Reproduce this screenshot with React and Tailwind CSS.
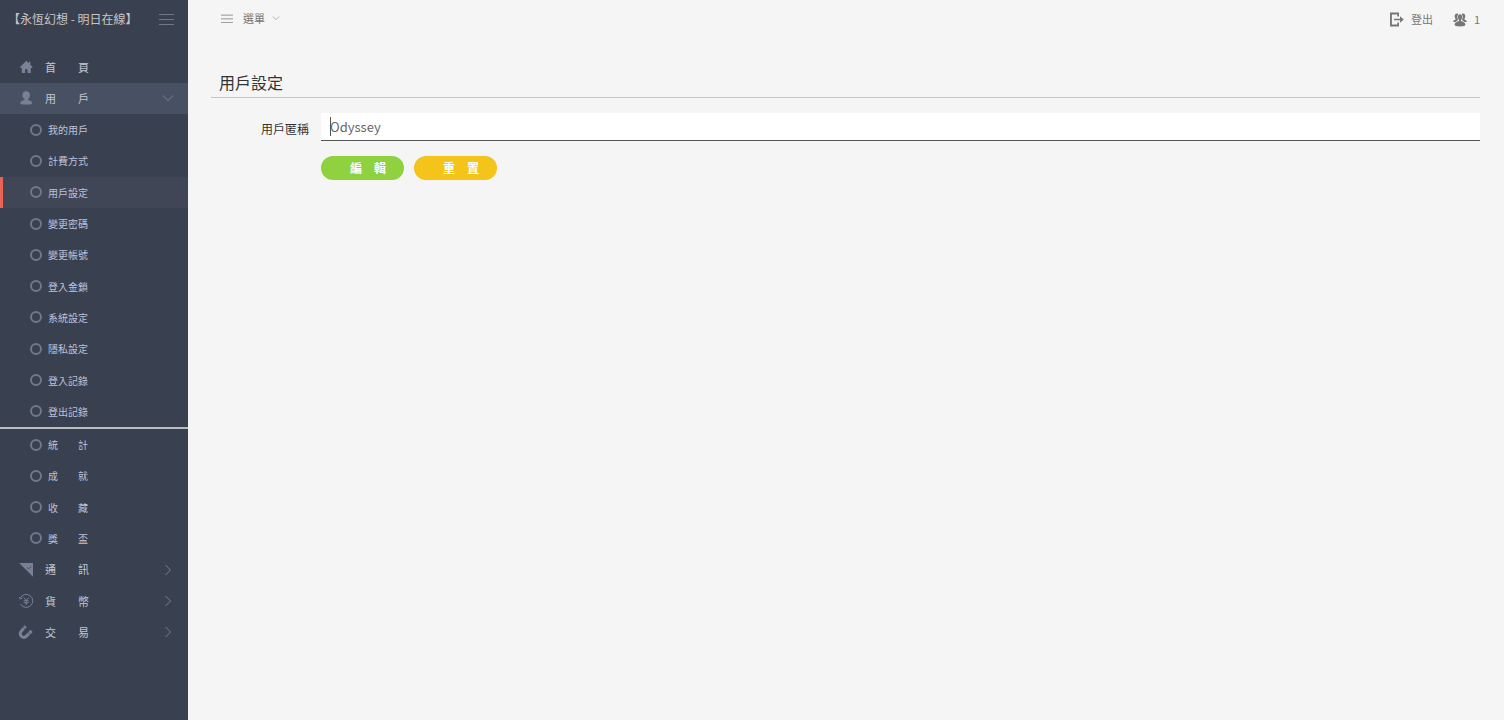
const userItems = [
  "我的用戶",
  "計費方式",
  "用戶設定",
  "變更密碼",
  "變更帳號",
  "登入金鎖",
  "系統設定",
  "隱私設定",
  "登入記錄",
  "登出記錄",
];

const statItems = ["統　　計", "成　　就", "收　　藏", "獎　　盃"];

const HomeIcon = () => (
  <svg viewBox="0 0 14 14" className="w-[14px] h-[14px]" fill="currentColor">
    <path d="M7.300.8 1.300 6.800v1.200h1.500v5h3.300V9.200h2.400V13h3.300V8h1.500V6.800l-2-2V1.800H9.800v1.500z" />
  </svg>
);

const UserIcon = () => (
  <svg viewBox="0 0 14 14" className="w-[14px] h-[14px]" fill="currentColor">
    <path d="M7.200.2C4.700.2 3.500 1.600 3.500 3.900c0 1.900.8 3.400 2 4.300v.9C3.600 9.700 1.300 10.100 1.300 12.300c0 1 1.400 1.300 5.900 1.300s5.900-.3 5.900-1.300c0-2.200-2.300-2.600-4.200-3.200v-.9c1.200-.9 2-2.400 2-4.300C10.900 1.600 9.700.2 7.200.2z" />
  </svg>
);

const MailIcon = () => (
  <svg viewBox="0 0 14 14" className="w-[14px] h-[14px]">
    <path d="M.2 0h14v14z" fill="currentColor" />
    <path d="m7.800 4.300 1.700 1.500 2.900-2.300" fill="none" stroke="#394150" strokeWidth=".8" />
  </svg>
);

const CoinIcon = () => (
  <svg viewBox="0 0 14 14" className="w-[14px] h-[14px] overflow-visible" fill="none" stroke="currentColor" strokeWidth="1">
    <path d="M1.200 4.400A6.500 6.500 0 1 1 1.500 10" />
    <path d="M.4 3.200 1.200 5l1.800-.6" />
    <path d="m4.600 3.500 2.600 3.100 2.600-3.100M7.200 6.600v4.400M4.700 6.700h5M4.700 8.700h5" />
  </svg>
);

const MagnetIcon = () => (
  <svg viewBox="0 0 14 14" className="w-[14px] h-[14px] overflow-visible" fill="none" stroke="currentColor" strokeWidth="3">
    <path d="M6.700 1.300 2.600 5.700C.8 7.700.9 10 2.400 11.300s3.800 1.200 5.600-.7l4.600-4.700" />
    <path d="m4 2.100 2.900 2.700M9 7.500l2.700 2.600" stroke="#394150" strokeWidth=".6" />
  </svg>
);

const LogoutIcon = () => (
  <svg viewBox="0 0 15 15" className="w-[15px] h-[15px]" fill="currentColor">
    <path d="M1 .5h9v4H8.300v-2H2.900v10h5.400v-2H10v4H1z" />
    <path d="M5 6.700h6V4.300l3.800 3.200L11 10.700V8.300H5z" />
  </svg>
);

const GroupIcon = () => (
  <svg viewBox="0 0 14 14" className="w-[14px] h-[14px]" fill="currentColor">
    <path d="M4 .5C5 .5 5.400 1 4.900 1.900 4.300 2.900 4.100 4.200 4.600 5.400L5 6.400 4.300 7.800 2.600 9H.3C.3 7.400.8 6.900 2.500 6.400V5.600C1.200 4.200 1.400.5 4 .5z" />
    <path d="M10 .5C9 .5 8.600 1 9.100 1.900c.6 1 .8 2.300.3 3.500L9 6.400l.7 1.400L11.400 9h2.300c0-1.600-.5-2.100-2.200-2.600v-.8C12.800 4.200 12.600.5 10 .5z" />
    <path d="M7 1.300c-1.500 0-2.100 1.200-2.100 2.700 0 1.300.4 2.300 1.100 2.900v1C4.200 8.700 1.600 9.200 1.600 11.600c0 1.500 1.900 1.900 5.400 1.900s5.400-.4 5.400-1.900C12.400 9.200 9.800 8.700 8 7.900v-1c.7-.6 1.100-1.600 1.100-2.900C9.100 2.500 8.500 1.300 7 1.300z" />
  </svg>
);

const MenuLines = ({ className }) => (
  <svg viewBox="0 0 15 12" className={className} fill="none" stroke="currentColor" preserveAspectRatio="none">
    <path d="M0 1.500h15M0 6.500h15M0 11.500h15" />
  </svg>
);

const Chevron = ({ className }) => (
  <svg viewBox="0 0 12 12" className={className} fill="none" stroke="currentColor">
    <path d="m3.500 1 5 5-5 5" />
  </svg>
);

const mainItems = [
  { label: "通　　訊", icon: MailIcon },
  { label: "貨　　幣", icon: CoinIcon },
  { label: "交　　易", icon: MagnetIcon },
];

const MainItem = ({ label, icon: Icon, arrow, open }) => (
  <li className={open ? "bg-[#485164]" : ""}>
    <a href="#" className="flex items-center h-full min-h-[31px] pl-[19px] pr-[14px] text-[11px] text-[#c3c7d0]">
      <span className="w-[26px] text-[#788195]">
        <Icon />
      </span>
      <span className="flex-1">{label}</span>
      {arrow && <Chevron className={open ? "w-3 h-3 rotate-90 text-[#788195]" : "w-3 h-3 text-[#788195]"} />}
    </a>
  </li>
);

const SubItem = ({ label, active }) => (
  <li className={active ? "bg-[#404656]" : ""}>
    <a
      href="#"
      className={
        active
          ? "flex items-center gap-[6px] h-full border-l-[3px] border-[#eb6357] pl-[27px] text-[10px] text-[#bfc0dc]"
          : "flex items-center gap-[6px] h-full border-l-[3px] border-transparent pl-[27px] text-[10px] text-[#bfc0dc]"
      }
    >
      <span className="w-3 h-3 rounded-full border-2 border-[#6c7a89]"></span>
      <span>{label}</span>
    </a>
  </li>
);

const Sidebar = () => (
  <aside className="w-[188px] shrink-0 bg-[#394150]">
    <div className="flex items-center justify-between h-[37px] pl-2 pr-[14px]">
      <a href="#" className="text-[12px] text-[#c6c6c6] whitespace-nowrap">【永恆幻想 - 明日在線】</a>
      <button type="button" aria-label="選單" className="text-[#6f7780]">
        <MenuLines className="w-[15px] h-3" />
      </button>
    </div>
    <nav className="pt-[14px]">
      <ul className="grid auto-rows-fr h-[63px]">
        <MainItem label="首　　頁" icon={HomeIcon} />
        <MainItem label="用　　戶" icon={UserIcon} arrow open />
      </ul>
      <ul className="grid auto-rows-fr h-[313px]">
        {userItems.map((label) => (
          <SubItem key={label} label={label} active={label === "用戶設定"} />
        ))}
      </ul>
      <hr className="border-0 h-[2px] bg-[#b9bdbf]" />
      <ul className="grid auto-rows-fr h-[125px]">
        {statItems.map((label) => (
          <SubItem key={label} label={label} />
        ))}
      </ul>
      <ul className="grid auto-rows-fr h-[94px]">
        {mainItems.map((item) => (
          <MainItem key={item.label} label={item.label} icon={item.icon} arrow />
        ))}
      </ul>
    </nav>
  </aside>
);

const TopBar = () => (
  <header className="flex items-center justify-between h-9 pl-[33px] pr-6 text-[11px] text-[#777]">
    <button type="button" className="flex items-center">
      <MenuLines className="w-3 h-[9px] mr-[10px]" />
      選單
      <Chevron className="w-2 h-2 ml-[7px] rotate-90 text-[#999]" />
    </button>
    <div className="flex items-center gap-5 pt-[3px]">
      <a href="#" className="flex items-center gap-[7px]">
        <LogoutIcon />
        登出
      </a>
      <a href="#" className="flex items-center gap-[7px]">
        <GroupIcon />
        1
      </a>
    </div>
  </header>
);

const buttonClass = "w-[83px] h-6 rounded-full pl-[11px] text-[12px] font-bold text-white";

const SettingsForm = () => (
  <form className="pt-[15px]" onSubmit={(e) => e.preventDefault()}>
    <div className="flex items-center">
      <label htmlFor="nickname" className="w-[110px] pr-3 pt-1 text-right text-[12px] text-[#333]">
        用戶匿稱
      </label>
      <div className="relative flex-1">
        <input
          id="nickname"
          type="text"
          placeholder="Odyssey"
          className="block w-full h-7 bg-white border-b border-[#555] px-[9px] text-[13px] text-[#666] placeholder:text-[#666] outline-none"
        />
        <span className="absolute left-[9px] top-1 w-px h-[19px] bg-[#555]"></span>
      </div>
    </div>
    <div className="flex gap-[10px] pt-[15px] pl-[110px]">
      <button type="submit" className={`${buttonClass} bg-[#8fd13f]`}>編　輯</button>
      <button type="reset" className={`${buttonClass} bg-[#f4c41a]`}>重　置</button>
    </div>
  </form>
);

const App = () => {
  return (
    <div className="flex min-h-screen bg-[#f5f5f5] font-['Noto_Sans_CJK_TC','Noto_Sans',sans-serif]">
      <Sidebar />
      <div className="flex-1 min-w-0">
        <TopBar />
        <main className="pl-[23px] pr-6 pt-8">
          <h1 className="h-[30px] border-b border-[#c6c6c6] pl-2 text-[16px] leading-7 text-[#333]">用戶設定</h1>
          <SettingsForm />
        </main>
      </div>
    </div>
  );
};

export default App;
